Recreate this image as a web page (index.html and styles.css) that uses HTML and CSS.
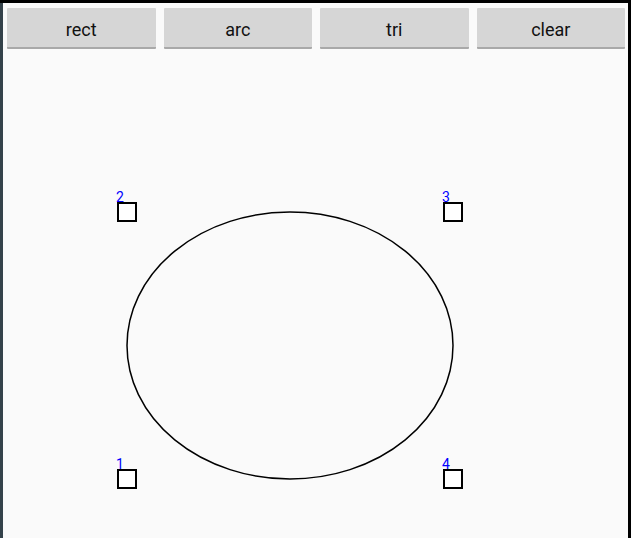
FILE: index.html
```html
<!DOCTYPE html>
<html lang="en">

<head>
    <meta charset="UTF-8">
    <meta name="viewport" content="width=device-width, initial-scale=1.0">
    <title>Shapes</title>
    <link rel="stylesheet" href="styles.css">
</head>

<body>
    <div class="screen">
        <div class="toolbar">
            <button type="button" class="tool">rect</button>
            <button type="button" class="tool">arc</button>
            <button type="button" class="tool">tri</button>
            <button type="button" class="tool">clear</button>
        </div>
        <svg class="canvas" viewBox="3 49 625 486" width="625" height="486">
            <ellipse cx="290" cy="345.5" rx="163" ry="133.5" fill="none" stroke="#000" stroke-width="1.5"/>
            <rect class="handle" x="118" y="203" width="18" height="18"/>
            <rect class="handle" x="444" y="203" width="18" height="18"/>
            <rect class="handle" x="118" y="470" width="18" height="18"/>
            <rect class="handle" x="444" y="470" width="18" height="18"/>
            <text class="label" x="116" y="202">2</text>
            <text class="label" x="442" y="202">3</text>
            <text class="label" x="116" y="469">1</text>
            <text class="label" x="442" y="469">4</text>
        </svg>
    </div>
</body>

</html>
```

FILE: styles.css
```css
body {
    margin: 0;
    padding: 0;
    height: 538px;
    overflow: hidden;
    background-color: #000;
    font-family: Roboto, 'Liberation Sans', sans-serif;
}

.screen {
    margin-top: 3px;
    margin-right: 3px;
    height: 535px;
    background-color: #fafafa;
    border-left: 3px solid #34424a;
}

.toolbar {
    display: grid;
    grid-template-columns: repeat(4, 1fr);
    gap: 8px;
    padding: 5px 3px 0 4px;
}

.tool {
    height: 41px;
    margin: 0;
    padding: 3px 0 0 0;
    border: none;
    border-bottom: 2px solid #a9a9a9;
    border-radius: 1px;
    background-color: #d6d6d6;
    color: #111;
    font-family: Roboto, 'Liberation Sans', sans-serif;
    font-size: 18px;
}

.canvas {
    display: block;
}

.handle {
    fill: #fff;
    stroke: #000;
    stroke-width: 2;
}

.label {
    fill: #0000ff;
    font-family: Roboto, 'Liberation Sans', sans-serif;
    font-size: 14px;
}
```
